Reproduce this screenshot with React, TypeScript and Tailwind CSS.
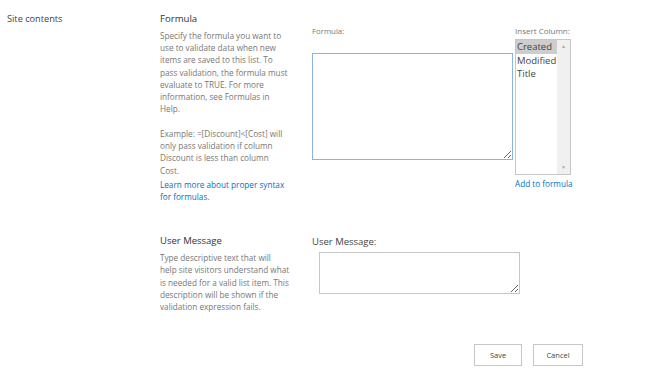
const formulaHelp = [
  "Specify the formula you want to",
  "use to validate data when new",
  "items are saved to this list. To",
  "pass validation, the formula must",
  "evaluate to TRUE. For more",
  "information, see Formulas in",
  "Help.",
];

const exampleHelp = [
  "Example: =[Discount]<[Cost] will",
  "only pass validation if column",
  "Discount is less than column",
  "Cost.",
];

const messageHelp = [
  "Type descriptive text that will",
  "help site visitors understand what",
  "is needed for a valid list item. This",
  "description will be shown if the",
  "validation expression fails.",
];

function Lines({ lines }: { lines: string[] }) {
  return (
    <>
      {lines.map((l) => (
        <div key={l} className="whitespace-nowrap">
          {l}
        </div>
      ))}
    </>
  );
}

export default function App() {
  return (
    <div className="w-[650px] h-[376px] bg-white text-[#444] font-['Open_Sans',sans-serif] overflow-hidden">
      <div className="flex">
        <div className="w-[160px] pl-[7px] pt-[12px] text-[9.2px] leading-[14px] text-[#444]">
          Site contents
        </div>

        <div className="flex flex-col">
          {/* formula section */}
          <div className="flex">
            <div className="w-[152px] pt-[12px]">
              <h2 className="text-[9.6px] leading-[14px] text-[#333]">Formula</h2>
              <div className="mt-[4px] text-[8.2px] leading-[12.2px] text-[#777]">
                <Lines lines={formulaHelp} />
                <div className="mt-[12.6px]">
                  <Lines lines={exampleHelp} />
                </div>
                <div className="mt-[2px] text-[#0072c6]">
                  <Lines lines={["Learn more about proper syntax", "for formulas."]} />
                </div>
              </div>
            </div>

            <div className="flex pt-[25px]">
              <div className="w-[203px]">
                <div className="text-[7.8px] leading-[12px] text-[#777]">Formula:</div>
                <textarea className="mt-[16px] block w-[201px] h-[107px] border border-[#8ab4e6] outline-none resize" />
              </div>
              <div className="w-[60px]">
                <div className="text-[8px] leading-[12px] text-[#777] whitespace-nowrap">Insert Column:</div>
                <div className="mt-[2px] w-[56px] h-[136px] border border-[#c6c6c6] flex">
                  <div className="flex-1 text-[9.5px] leading-[13.5px] text-[#444]">
                    <div className="bg-[#cdcdcd] pl-[1px]">Created</div>
                    <div className="pl-[1px]">Modified</div>
                    <div className="pl-[1px]">Title</div>
                  </div>
                  <div className="w-[13px] bg-[#f0f0f0] flex flex-col items-center justify-between py-[3px] text-[5px] text-[#a8a8a8]">
                    <span>▲</span>
                    <span>▼</span>
                  </div>
                </div>
                <div className="mt-[3px] text-[8.2px] leading-[12px] text-[#0072c6] whitespace-nowrap">Add to formula</div>
              </div>
            </div>
          </div>

          {/* user message section */}
          <div className="flex mt-[31px]">
            <div className="w-[152px]">
              <h2 className="text-[9.5px] leading-[14px] text-[#333]">User Message</h2>
              <div className="mt-[4px] text-[8.2px] leading-[12.2px] text-[#777]">
                <Lines lines={messageHelp} />
              </div>
            </div>
            <div>
              <div className="pt-[1px] text-[9.5px] leading-[13px] text-[#444]">User Message:</div>
              <textarea className="ml-[7px] mt-[4px] block w-[201px] h-[42px] border border-[#c6c6c6] outline-none resize" />
            </div>
          </div>

          {/* buttons */}
          <div className="flex justify-end gap-[11px] mt-[31px] w-[423px]">
            <button className="w-[48px] h-[22px] border border-[#c6c6c6] bg-white text-[7.5px] text-[#444]">Save</button>
            <button className="w-[50px] h-[22px] border border-[#c6c6c6] bg-white text-[7.5px] text-[#444]">Cancel</button>
          </div>
        </div>
      </div>
    </div>
  );
}
